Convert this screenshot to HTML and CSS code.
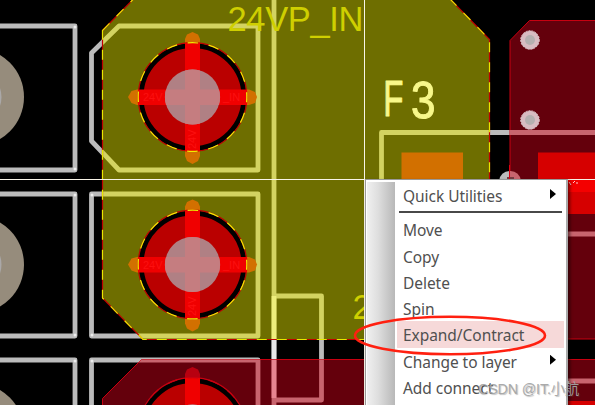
FILE: index.html
```
<!DOCTYPE html>
<html lang="en">
<head>
<meta charset="utf-8">
<title>PCB layout</title>
<link rel="stylesheet" href="styles.css">
</head>
<body>
<main class="workspace">
<svg class="board" width="595" height="405" viewBox="0 0 595 405">
  <defs>
    <path id="plane" d="M102.5 30.5L133.500 -1H450L489.500 39.500V339.500H143L102.500 298Z"/>
    <path id="lower" d="M102.500 410V398.500L141.500 359.500H600V410Z"/>
    <path id="upper" d="M510 340V40.500L529.500 20.500H600V339H510Z"/>
    <clipPath id="in-plane"><use href="#plane"/></clipPath>
    <clipPath id="in-maroon"><path d="M102.500 410V398.500L141.500 359.500H600V410ZM510 339V40.500L529.500 20.500H600V339Z"/></clipPath>
    <g id="silk">
      <path d="M0 26H75V170H0M0 194H75V336H0M0 360H75V410"/>
      <path d="M119 26H258V170H119L91.500 141V53ZM258 194H91.500V336H258ZM91.500 410V360H258V410"/>
      <path d="M274 0V405M276 296H321.500V400H274M600 132.500H381.500V185M560 234H600M560 381H600"/>
    </g>
    <g id="thermal">
      <path class="tip" d="M128 97L131.500 91L137 89.500H249L255 92L257 97L255 103L249 105H137L131.500 103Z"/>
      <path class="tip" d="M192.500 32L198 34.500L200 39V156L198 161L192.500 164L187 161L185 156V39L187 34.500Z"/>
      <circle class="gap" cx="192.500" cy="97" r="51.500"/>
      <circle class="rim-base" cx="192.500" cy="97" r="54.300"/>
      <path class="spoke" d="M138 89.500H247V105H138ZM185 43H200V151H185Z"/>
      <circle class="rim" cx="192.500" cy="97" r="54.300"/>
      <circle class="drill" cx="192.500" cy="97" r="27.500"/>
      <path class="drill-cross" d="M166 89.500H219A27.500 27.500 0 0 1 219 105H200V123.500A27.500 27.500 0 0 1 185 123.500V105H166A27.500 27.500 0 0 1 166 89.500ZM185 70.500A27.500 27.500 0 0 1 200 70.500V90H185Z"/>
    </g>
    <g id="via"><circle class="via-ring" r="9.300"/><circle class="via-hole" r="5"/></g>
  </defs>
  <rect width="595" height="405"/>
  <g class="edge-pads"><circle cx="-24.750" cy="97" r="48.750"/><circle cx="-24.750" cy="264.500" r="48.750"/><circle cx="-24.750" cy="432" r="48.750"/></g>
  <g class="edge-holes"><circle cx="-26" cy="97" r="27.500"/><circle cx="-26" cy="264.500" r="27.500"/></g>
  <use href="#silk" class="silk silk-black"/>
  <path class="silk-joint" d="M274 340V359"/>
  <g class="corners"><circle cx="75" cy="27" r="1.500"/><circle cx="75" cy="169" r="1.500"/><circle cx="75" cy="195" r="1.500"/><circle cx="75" cy="335" r="1.500"/><circle cx="75" cy="361" r="1.500"/><circle cx="92" cy="195" r="1.500"/><circle cx="92" cy="335" r="1.500"/><circle cx="92" cy="361" r="1.500"/></g>
  <use href="#upper" class="maroon"/>
  <use href="#lower" class="maroon"/>
  <use href="#plane" class="olive"/>
  <rect class="pad-orange" x="401.500" y="152.500" width="61.500" height="40"/>
  <path class="pad-red" d="M538 152.500H595V214H538ZM560 401H595V405H560Z"/>
  <path class="pad-hot" d="M560 180H595V192H560Z"/>
  <g clip-path="url(#in-plane)"><use href="#silk" class="silk silk-olive"/><path class="silk-bright" d="M274 296V339"/></g>
  <g clip-path="url(#in-maroon)"><use href="#silk" class="silk silk-maroon"/><path class="silk-pink" d="M274 360V398"/></g>
  <use href="#plane" class="outline-red"/>
  <use href="#plane" class="outline-dash"/>
  <use href="#thermal" class="on-olive"/>
  <use href="#thermal" class="on-olive" y="167.500"/>
  <use href="#thermal" class="on-maroon" y="335"/>
  <g class="net-tags">
    <text x="143" y="101">24V</text><text x="223" y="101">_IN</text>
    <text x="143" y="268.500">24V</text><text x="223" y="268.500">_IN</text>
    <text transform="translate(196 149) rotate(-90)">24V</text>
    <text transform="translate(196 316) rotate(-90)">24V</text>
  </g>
  <use href="#via" x="530" y="40"/>
  <use href="#via" x="530" y="120"/>
  <path class="half-gray" d="M510 171A10.500 10.500 0 0 0 499 181H510Z"/>
  <path class="half-pink" d="M510 171A10.500 10.500 0 0 1 521 181H510Z"/>
  <path class="hole-dark" d="M507 177H514V180H507Z"/>
  <path class="edge-line" d="M509.500 165V180"/>
  <text class="net" x="227.500" y="31" textLength="136">24VP_IN</text>
  <text class="net" x="352.500" y="318.500">2</text>
  <text class="ref" transform="translate(383.200 116.300) scale(.66 1)">F</text>
  <text class="ref" transform="translate(411 118.300) scale(.88 1.050)">3</text>
  <path class="cursor" d="M0 179.500H595M364.500 0V405"/>
  <path class="specks" d="M569 182l2 3M573 183l2-2M577 182v2"/>
</svg>
<nav class="menu">
  <div class="gutter"></div>
  <ul class="items">
    <li class="item"><span>Quick Utilities</span><i class="arrow"></i></li>
    <li class="rule"></li>
    <li class="item"><span>Move</span></li>
    <li class="item"><span>Copy</span></li>
    <li class="item"><span>Delete</span></li>
    <li class="item"><span>Spin</span></li>
    <li class="item active"><span>Expand/Contract</span></li>
    <li class="item"><span>Change to layer</span><i class="arrow"></i></li>
    <li class="item"><span>Add connect</span></li>
  </ul>
</nav>
<svg class="marker" width="595" height="405"><ellipse cx="450" cy="335.500" rx="95" ry="18.700"/></svg>
<div class="watermark">CSDN @IT.小航</div>
</main>
</body>
</html>
```
FILE: styles.css
```
body { margin: 0; background: #000; }
.workspace { position: relative; width: 595px; height: 405px; overflow: hidden; }
.board { display: block; }
.edge-pads { fill: #968c7c; }
.edge-holes { fill: #aaa8a8; }
.silk { fill: none; stroke-width: 4.8; stroke-linecap: round; stroke-linejoin: round; }
.silk-black { stroke: #bbb; }
.silk-olive { stroke: #d3d361; }
.silk-maroon { stroke: #c8646e; }
.silk-joint { stroke: #e8e8e8; stroke-width: 4.8; }
.silk-bright { stroke: #eeee7c; stroke-width: 4.8; }
.silk-pink { stroke: #e78490; stroke-width: 4.8; }
.corners { fill: #eee; }
.maroon { fill: #64000c; stroke: #c80010; }
.olive { fill: #6e6e00; }
.outline-red, .outline-dash { fill: none; stroke: #c00000; stroke-width: 1.2; }
.outline-dash { stroke: #e8e800; stroke-dasharray: 10 10; }
.pad-orange { fill: #d27000; }
.pad-red { fill: #d60000; }
.pad-hot { fill: #f40000; }
.on-olive { --tip: #d27000; --dash: #eeee00; --rim: #c00000; }
.on-maroon { --tip: #b80010; --dash: #c80010; --rim: #c80010; }
.tip { fill: var(--tip); }
.gap { fill: #ba0000; stroke: #000; stroke-width: 5; }
.rim-base { fill: none; stroke: var(--rim); stroke-width: 1.2; }
.rim { fill: none; stroke: var(--dash); stroke-width: 1.2; stroke-dasharray: 10.66 10.66; stroke-dashoffset: 5.33; }
.spoke { fill: #f00000; }
.drill { fill: #b08084; }
.drill-cross { fill: #c57d80; }
.net-tags { font: 11px "Liberation Sans", sans-serif; fill: #fc1010; }
.via-ring { fill: #d8bcc2; stroke: #d8bcc2; stroke-dasharray: 2 1; }
.via-hole { fill: #b4b0b0; }
.half-gray { fill: #bbb; }
.half-pink { fill: #c8646e; }
.hole-dark { fill: #773c42; }
.edge-line { stroke: #e00010; }
.net { font: 34.500px "Liberation Sans", sans-serif; fill: #cfcf00; }
.ref { font: 50px "Liberation Sans", sans-serif; fill: #f8f88a; stroke: #f8f88a; stroke-width: 1; stroke-linejoin: round; }
.cursor { fill: none; stroke: #f8f4e8; }
.specks { stroke: #ffc8c8; }
.menu {
  position: absolute; left: 365px; top: 179px; width: 203px; height: 240px;
  box-sizing: border-box; display: flex; background: #fff;
  border: 1px solid #999; border-right: 2px solid #aaa; padding: 2px 0 0 1px;
  box-shadow: 2px 2px 3px rgba(0, 0, 0, .5);
}
.gutter { width: 28px; background: linear-gradient(90deg, #f0f0f0, #dedede 40%, #b8b8b8); }
.items {
  flex: 1; list-style: none; margin: 0; padding: 0 2px 0 2px;
  font: 15.500px/26.300px "Noto Sans", sans-serif; color: #505050; white-space: nowrap;
}
.item { position: relative; height: 26.300px; padding-left: 6px; letter-spacing: -.05px; }
.item span { display: block; padding-top: 1px; }
.rule { height: 2px; margin: 3px 2px 3px; background: #484848; }
.active { background: #f6d9d9; }
.arrow {
  position: absolute; right: 8px; top: 7px; width: 6px; height: 10px;
  background: #000; clip-path: polygon(0 0, 100% 50%, 0 100%);
}
.marker { position: absolute; left: 0; top: 0; }
.marker ellipse { fill: none; stroke: #ff2010; stroke-width: 2.600; }
.watermark {
  position: absolute; left: 478px; top: 378px; white-space: nowrap; letter-spacing: -.15px;
  font: 14.300px/22px "Liberation Sans", "Noto Sans CJK SC", sans-serif;
  color: rgba(165, 165, 165, .95); text-shadow: 1px 1px 1px rgba(80, 80, 80, .35);
}
```
